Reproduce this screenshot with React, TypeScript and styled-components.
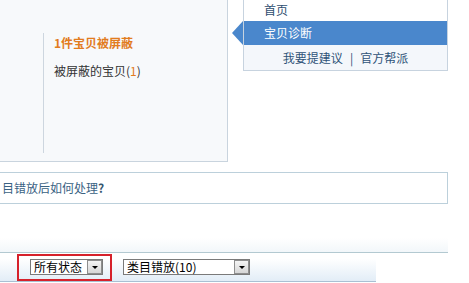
import React from "react";
import styled, { createGlobalStyle } from "styled-components";

const Global = createGlobalStyle`
  html, body { margin: 0; padding: 0; background: #fff; overflow: hidden; }
  body { font-family: "Noto Sans CJK SC", "Liberation Sans", sans-serif; font-size: 12px; color: #333; }
`;

const Page = styled.div`
  width: 469px;
  height: 283px;
  display: flex;
  flex-direction: column;
`;

const TopRow = styled.div`
  display: flex;
  align-items: flex-start;
`;

const Panel = styled.div`
  box-sizing: border-box;
  width: 228px;
  height: 162px;
  background: #f7f9fb;
  border-right: 1px solid #c9d4de;
  border-bottom: 1px solid #c9d4de;
  padding: 33px 0 0 43px;
`;

const Detail = styled.div`
  height: 120px;
  border-left: 1px solid #cdd6df;
  padding-left: 10px;
`;

const Title = styled.div`
  font-weight: bold;
  color: #e27c1e;
  line-height: 20px;
  margin-bottom: 8px;
`;

const Line = styled.div`
  line-height: 20px;
  color: #333;
`;

const Num = styled.span`
  color: #e27c1e;
`;

const Sidebar = styled.div`
  margin-left: 15px;
  width: 205px;
  border-left: 1px solid #c7d3df;
  border-right: 1px solid #c7d3df;
  border-bottom: 1px solid #c7d3df;
  box-sizing: border-box;
`;

const NavItem = styled.div<{ $active?: boolean }>`
  position: relative;
  height: ${(p) => (p.$active ? 24 : 21)}px;
  line-height: ${(p) => (p.$active ? 24 : 20)}px;
  padding-left: 20px;
  background: ${(p) => (p.$active ? "#4a87cc" : "#fff")};
  color: ${(p) => (p.$active ? "#fff" : "#2e4e70")};
`;

const Arrow = styled.span`
  position: absolute;
  left: -12px;
  top: 0;
  width: 0;
  height: 0;
  border-top: 12px solid transparent;
  border-bottom: 12px solid transparent;
  border-right: 11px solid #4a87cc;
`;

const SideFooter = styled.div`
  height: 25px;
  line-height: 26px;
  background: #f4f7fb;
  text-align: center;
  color: #2f5378;
`;

const Sep = styled.span`
  margin: 0 7px;
`;

const Question = styled.div`
  margin-top: 10px;
  margin-left: -1px;
  width: 449px;
  height: 32px;
  box-sizing: border-box;
  border: 1px solid #bcd0db;
  background: #fff;
  padding-left: 2px;
  line-height: 30px;
  color: #3a6283;
`;

const Q = styled.b`
  color: #35576f;
`;

const BarTop = styled.div`
  margin-top: 34px;
  width: 448px;
  height: 14px;
  background: linear-gradient(#ffffff, #f2f7fa);
  border-bottom: 1px solid #b3c9d1;
`;

const Toolbar = styled.div`
  width: 376px;
  height: 29px;
  box-sizing: border-box;
  background: linear-gradient(#ffffff 20%, #e2edf7);
  border-bottom: 1px solid #a9c0d3;
  display: flex;
  align-items: flex-start;
  padding: 1px 0 0 17px;
  gap: 11px;
`;

const Highlight = styled.div`
  width: 95px;
  height: 27px;
  box-sizing: border-box;
  border: 2px solid #d6212b;
  padding: 3px 0 0 11px;
`;

const SelectBox = styled.div<{ $w: number }>`
  width: ${(p) => p.$w}px;
  height: 16px;
  box-sizing: border-box;
  border: 1px solid #7a7a7a;
  background: #fff;
  display: flex;
  align-items: center;
  justify-content: space-between;
  padding-left: 3px;
  color: #000;
  line-height: 14px;
`;

const SelWrap = styled.div`
  padding-top: 5px;
`;

const DropBtn = styled.span`
  width: 15px;
  height: 14px;
  box-sizing: border-box;
  border: 1px solid #8e8e8e;
  background: linear-gradient(#f4f4f4, #d6d6d6);
  display: flex;
  align-items: center;
  justify-content: center;
  &::after {
    content: "";
    border-left: 3px solid transparent;
    border-right: 3px solid transparent;
    border-top: 3px solid #000;
    margin-top: 1px;
  }
`;

export default function App() {
  return (
    <Page>
      <Global />
      <TopRow>
        <Panel>
          <Detail>
            <Title>1件宝贝被屏蔽</Title>
            <Line>
              被屏蔽的宝贝(<Num>1</Num>)
            </Line>
          </Detail>
        </Panel>
        <Sidebar>
          <NavItem>首页</NavItem>
          <NavItem $active>
            <Arrow />
            宝贝诊断
          </NavItem>
          <SideFooter>
            我要提建议<Sep>|</Sep>官方帮派
          </SideFooter>
        </Sidebar>
      </TopRow>
      <Question>
        目错放后如何处理<Q>?</Q>
      </Question>
      <BarTop />
      <Toolbar>
        <Highlight>
          <SelectBox $w={73}>
            所有状态
            <DropBtn />
          </SelectBox>
        </Highlight>
        <SelWrap>
          <SelectBox $w={127}>
            类目错放(10)
            <DropBtn />
          </SelectBox>
        </SelWrap>
      </Toolbar>
    </Page>
  );
}
